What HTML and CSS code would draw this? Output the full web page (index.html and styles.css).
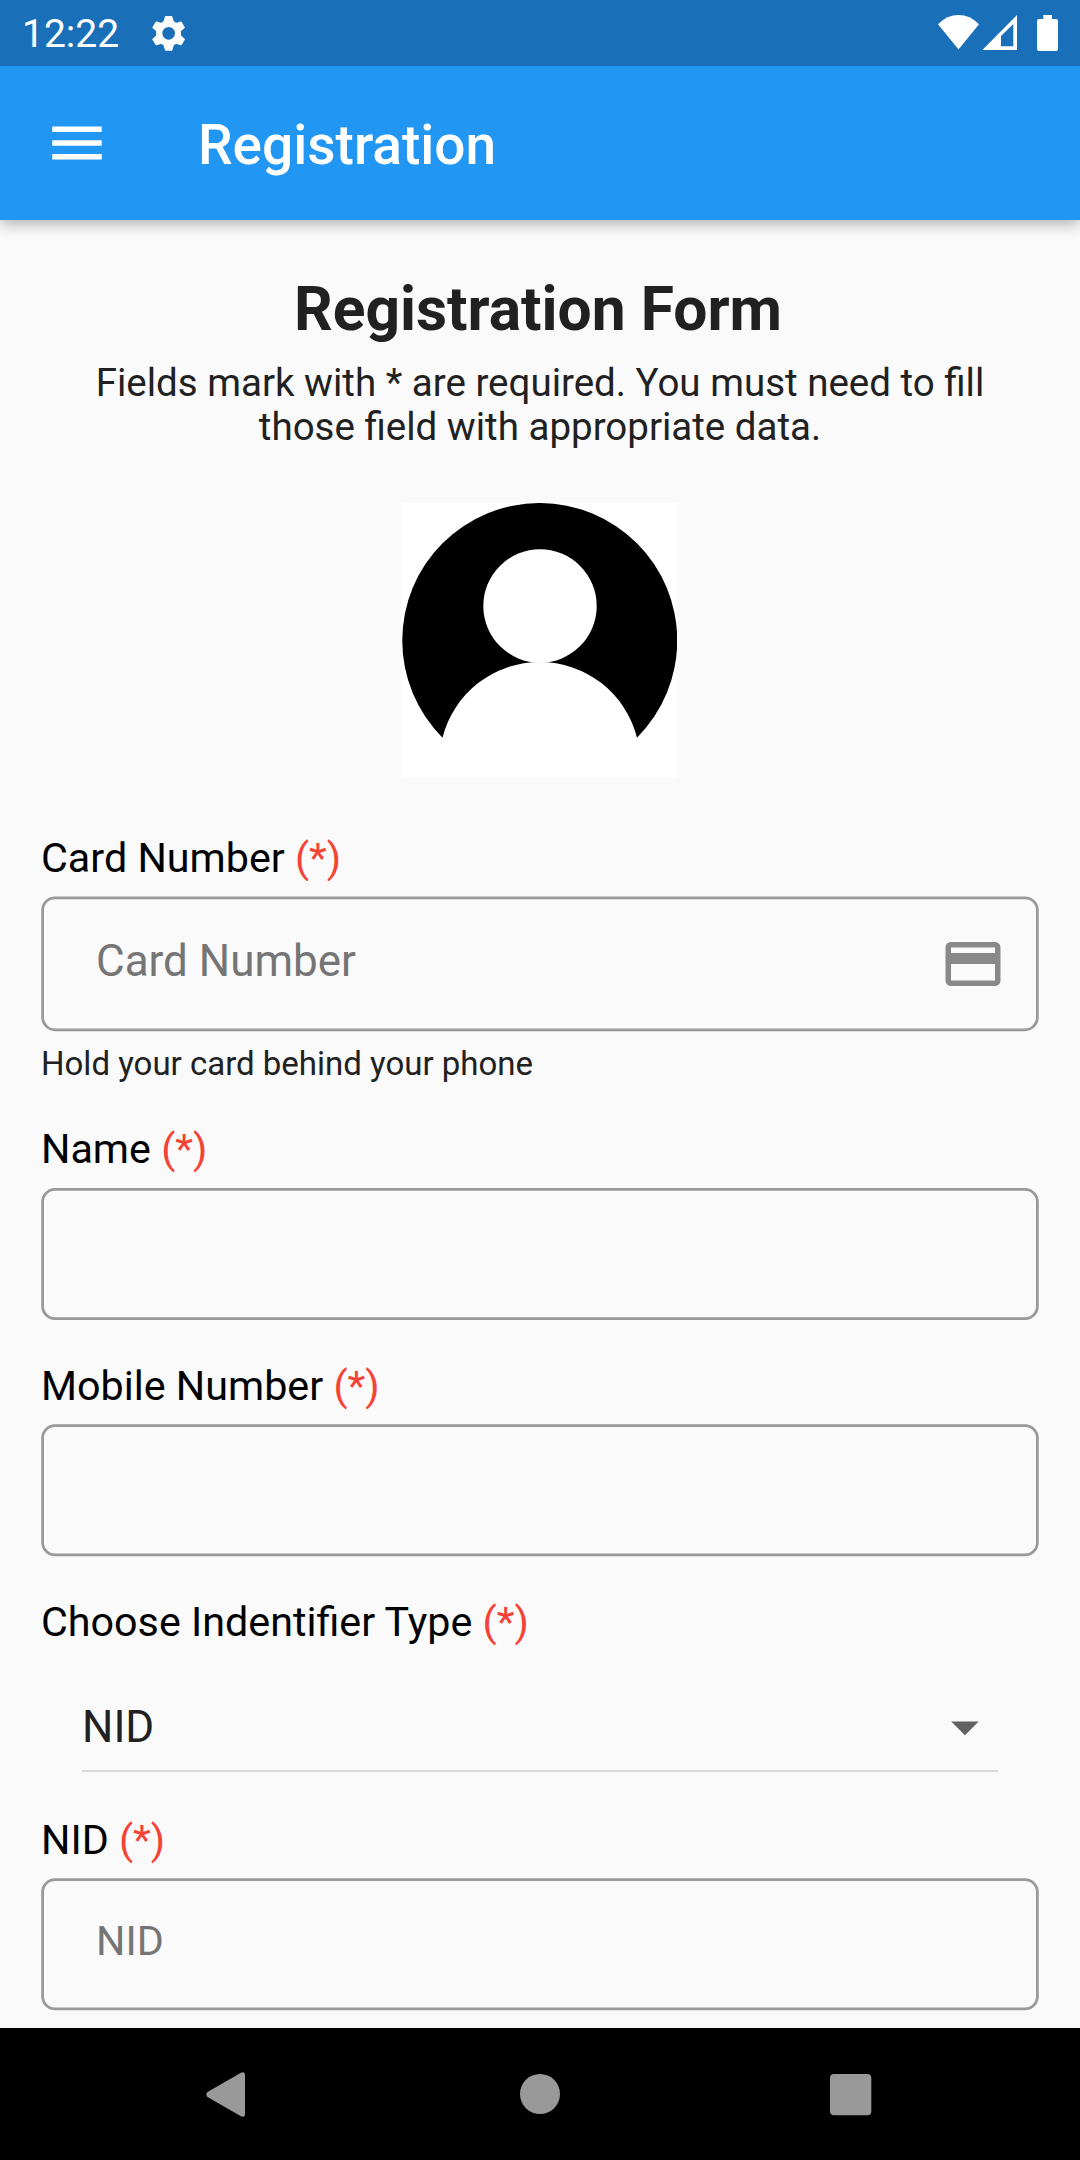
FILE: index.html
```html
<!DOCTYPE html>
<html lang="en">
<head>
<meta charset="utf-8">
<title>Registration</title>
<link rel="stylesheet" href="styles.css">
</head>
<body>
<div class="screen">
  <div class="status-bar">
    <span class="clock">12:22</span>
    <svg class="gear" width="37" height="40" viewBox="30 15 111 120"><path fill="#fff" stroke="#fff" stroke-width="4" stroke-linejoin="round" fill-rule="evenodd" d="M77 26H95L99.500 41 108 47 123 42.500 132.500 58.500 121 68.500V83.500L132.500 94 123 110 108 105 99.500 111 95 126H77L72.500 111 64 105 49 110 39 94 50.500 83.500V68.500L39 58.500 49 42.500 64 47 72.500 41ZM86 55A21 21 0 1 0 86 97 21 21 0 1 0 86 55Z"/></svg>
    <svg class="system-icons" width="124" height="40" viewBox="936 13 124 40" fill="#fff">
      <path d="M958.5 49.5 938 24.2Q947 15 958.5 15T979 24.2Z"/>
      <path fill-rule="evenodd" d="M982.3 50 1017 15V50ZM1001 46.2H1013.3V24L1001 36Z"/>
      <path d="M1043.3 15h8.7v4h4q2 0 2 2v28q0 2-2 2h-17q-2 0-2-2v-28q0-2 2-2h4.300z"/>
    </svg>
  </div>
  <header class="app-bar">
    <svg class="menu" width="66" height="66" viewBox="0 0 24 24"><path fill="#fff" d="M3 18h18v-2H3v2zm0-5h18v-2H3v2zm0-7v2h18V6H3z"/></svg>
    <h1 class="app-title">Registration</h1>
  </header>
  <main class="form">
    <h2 class="form-title">Registration Form</h2>
    <p class="intro">Fields mark with * are required. You must need to fill<br>those field with appropriate data.</p>
    <svg class="avatar" width="275" height="275" viewBox="0 0 275 275">
      <rect width="275" height="275" fill="#fff"/>
      <path d="M40.500 234.700A137.500 137.500 0 1 1 235 234.700A100.300 100.300 0 0 0 40.500 234.700Z"/>
      <circle cx="138" cy="103" r="56.700" fill="#fff"/>
    </svg>

    <div class="label">Card Number <span class="required">(*)</span></div>
    <div class="field card-field">
      <svg class="outline" width="998" height="136" viewBox="41 896 998 136"><rect x="42.620" y="897.770" width="994.750" height="132" rx="12.400"/></svg>
      <div class="field-body">
        <span class="hint large">Card Number</span>
        <svg class="card-icon" width="66" height="66" viewBox="0 0 24 24"><path fill="#898989" d="M20 4H4c-1.110 0-1.990.890-1.990 2L2 18c0 1.110.890 2 2 2h16c1.110 0 2-.890 2-2V6c0-1.110-.890-2-2-2zm0 14H4v-6h16v6zm0-10H4V6h16v2z"/></svg>
      </div>
    </div>
    <div class="helper">Hold your card behind your phone</div>

    <div class="label name-label">Name <span class="required">(*)</span></div>
    <div class="field name-field">
      <svg class="outline" width="998" height="133" viewBox="41 1188 998 133"><rect x="42.620" y="1189.300" width="994.750" height="129.250" rx="12.400"/></svg>
    </div>

    <div class="label mobile-label">Mobile Number <span class="required">(*)</span></div>
    <div class="field">
      <svg class="outline" width="998" height="133" viewBox="41 1424 998 133"><rect x="42.620" y="1425.600" width="994.750" height="129.250" rx="12.400"/></svg>
    </div>

    <div class="label type-label">Choose Indentifier Type <span class="required">(*)</span></div>
    <div class="dropdown">
      <span>NID</span>
      <svg class="arrow" width="28" height="15" viewBox="0 0 28 15"><path fill="#616161" d="M.2.400H27.700L13.950 14.150Z"/></svg>
    </div>

    <div class="label nid-label">NID <span class="required">(*)</span></div>
    <div class="field">
      <svg class="outline" width="998" height="133" viewBox="41 1878 998 133"><rect x="42.620" y="1879.650" width="994.750" height="129.250" rx="12.400"/></svg>
      <div class="field-body"><span class="hint">NID</span></div>
    </div>
  </main>
  <nav class="nav-bar">
    <svg width="1080" height="132" viewBox="0 2028 1080 132" fill="#999">
      <path d="M207.500 2092 240.500 2073Q245 2070.500 245 2075.500V2113.500Q245 2118.500 240.500 2116L207.500 2097Q205 2094.500 207.500 2092Z"/>
      <circle cx="540" cy="2094" r="20"/>
      <rect x="830" y="2074" width="41.300" height="41.300" rx="4"/>
    </svg>
  </nav>
</div>
</body>
</html>
```
FILE: styles.css
```css
* { box-sizing: border-box; }

body {
  margin: 0;
  font-family: Roboto, sans-serif;
}

svg { display: block; flex: none; }

.screen {
  width: 1080px;
  height: 2160px;
  display: flex;
  flex-direction: column;
  overflow: hidden;
  background: #fafafa;
}

/* stays above the app bar's shadow */
.status-bar {
  position: relative;
  z-index: 1;
  height: 66px;
  display: flex;
  align-items: flex-start;
  padding: 0 20px 0 22px;
  background: #1a70b8;
  color: #fff;
}

.clock {
  width: 128px;
  padding-top: 12px;
  font-size: 39px;
  line-height: 45px;
}

.gear { margin-top: 13px; }
.system-icons { margin: 13px 0 0 auto; }

.app-bar {
  height: 154px;
  flex: none;
  display: flex;
  align-items: center;
  padding-left: 44px;
  background: #2196f3;
  color: #fff;
  box-shadow: 0 4px 14px rgba(0, 0, 0, .3);
}

.app-title {
  margin: 4px 0 0 88px;
  font-size: 55px;
  font-weight: 500;
  line-height: 64px;
}

.form {
  flex: 1;
  padding: 54px 41px 0;
}

.form-title {
  margin: 0;
  padding-right: 4px;
  color: #212121;
  font-size: 60.5px;
  font-weight: 700;
  line-height: 71px;
  text-align: center;
}

.intro {
  margin: 16px 0 0;
  height: 89px;
  color: #212121;
  font-size: 38.5px;
  line-height: 44px;
  text-align: center;
}

.avatar { margin: 53px auto 0 361px; }

.label {
  margin-top: 56px;
  height: 48px;
  color: #000;
  font-size: 41.25px;
  line-height: 48px;
  white-space: nowrap;
}

.required { color: #f44336; }

.field {
  display: grid;
  margin-top: 14px;
  height: 133px;
}

.card-field { height: 136px; }
.name-field { margin-top: 15px; }

.outline, .field-body { grid-area: 1 / 1; }

.outline rect {
  fill: none;
  stroke: #999;
  stroke-width: 2.75;
}

.field-body {
  display: flex;
  align-items: flex-start;
  justify-content: space-between;
  padding: 35px 33px 0 55px;
}

.hint {
  padding-top: 4px;
  color: #757575;
  font-size: 41.25px;
  line-height: 48px;
}

.hint.large {
  font-size: 44px;
  line-height: 52px;
}

.helper {
  margin-top: 12px;
  height: 39px;
  color: #212121;
  font-size: 33px;
  line-height: 39px;
}

.name-label { margin-top: 42px; }
.mobile-label { margin-top: 41px; }
.type-label { margin-top: 41px; }
.nid-label { margin-top: 44px; }

.dropdown {
  display: flex;
  align-items: flex-start;
  justify-content: space-between;
  margin: 55px 41px 0;
  height: 71px;
  border-bottom: 2px solid #dadada;
  color: #212121;
  font-size: 44px;
  line-height: 52px;
}

.arrow { margin: 20px 19px 0 0; }

.nav-bar {
  flex: none;
  height: 132px;
  background: #000;
}
```
